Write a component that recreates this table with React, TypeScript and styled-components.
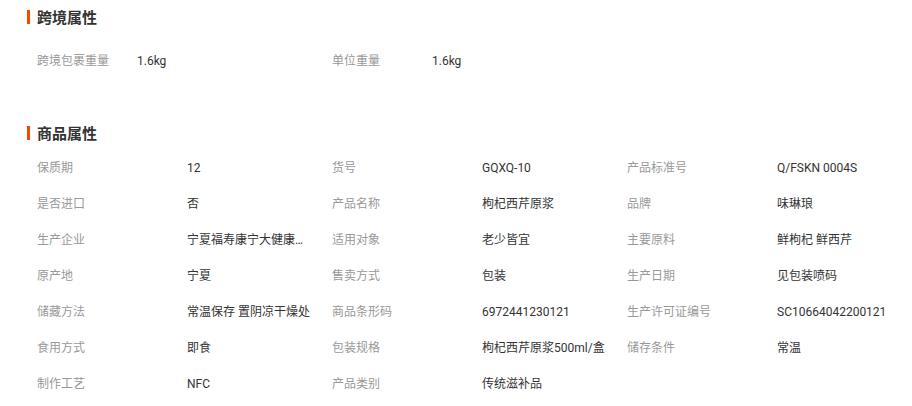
import styled, { createGlobalStyle } from 'styled-components';

const GlobalStyle = createGlobalStyle`
  html, body {
    margin: 0;
    padding: 0;
    background: #ffffff;
  }
  body {
    font-family: Roboto, Arial, "Liberation Sans", "Noto Sans CJK SC", sans-serif;
    font-size: 12px;
    color: #333333;
  }
`;

export const Page = styled.div`
  width: 912px;
  height: 406px;
  overflow: hidden;
  padding-left: 27px;
  box-sizing: border-box;
`;

export const Section = styled.section<{ $gap?: number }>`
  margin-top: ${(p) => p.$gap ?? 0}px;
`;

export const Title = styled.h3`
  margin: 0;
  height: 33px;
  display: flex;
  align-items: center;
  gap: 7px;
  font-family: "Noto Sans CJK SC", sans-serif;
  font-size: 15px;
  font-weight: 700;
  color: #333333;

  &::before {
    content: '';
    width: 3px;
    height: 14px;
    background: #ff4400;
  }
`;

export const AttrList = styled.ul<{ $top: number }>`
  list-style: none;
  margin: ${(p) => p.$top}px 0 0;
  padding: 0 0 0 10px;
  display: grid;
  grid-template-columns: repeat(3, 295px);
`;

export const AttrItem = styled.li`
  height: 36px;
  line-height: 36px;
  display: flex;
  white-space: nowrap;
`;

export const AttrLabel = styled.span<{ $width: number }>`
  width: ${(p) => p.$width}px;
  flex-shrink: 0;
  color: #999999;
`;

export const AttrValue = styled.span`
  max-width: 126px;
  overflow: hidden;
  text-overflow: ellipsis;
  color: #333333;
`;

type Attr = [string, string];

const crossBorder: Attr[] = [
  ['跨境包裹重量', '1.6kg'],
  ['单位重量', '1.6kg'],
];

const goods: Attr[] = [
  ['保质期', '12'],
  ['货号', 'GQXQ-10'],
  ['产品标准号', 'Q/FSKN 0004S'],
  ['是否进口', '否'],
  ['产品名称', '枸杞西芹原浆'],
  ['品牌', '味琳琅'],
  ['生产企业', '宁夏福寿康宁大健康产业有限公司'],
  ['适用对象', '老少皆宜'],
  ['主要原料', '鲜枸杞 鲜西芹'],
  ['原产地', '宁夏'],
  ['售卖方式', '包装'],
  ['生产日期', '见包装喷码'],
  ['储藏方法', '常温保存 置阴凉干燥处'],
  ['商品条形码', '6972441230121'],
  ['生产许可证编号', 'SC10664042200121'],
  ['食用方式', '即食'],
  ['包装规格', '枸杞西芹原浆500ml/盒'],
  ['储存条件', '常温'],
  ['制作工艺', 'NFC'],
  ['产品类别', '传统滋补品'],
];

function AttrGrid({ items, labelWidth, top }: { items: Attr[]; labelWidth: number; top: number }) {
  return (
    <AttrList $top={top}>
      {items.map(([label, value]) => (
        <AttrItem key={label}>
          <AttrLabel $width={labelWidth}>{label}</AttrLabel>
          <AttrValue title={value}>{value}</AttrValue>
        </AttrItem>
      ))}
    </AttrList>
  );
}

export default function App() {
  return (
    <>
      <GlobalStyle />
      <Page>
        <Section>
          <Title>跨境属性</Title>
          <AttrGrid items={crossBorder} labelWidth={100} top={10} />
        </Section>
        <Section $gap={37}>
          <Title>商品属性</Title>
          <AttrGrid items={goods} labelWidth={150} top={1} />
        </Section>
      </Page>
    </>
  );
}
